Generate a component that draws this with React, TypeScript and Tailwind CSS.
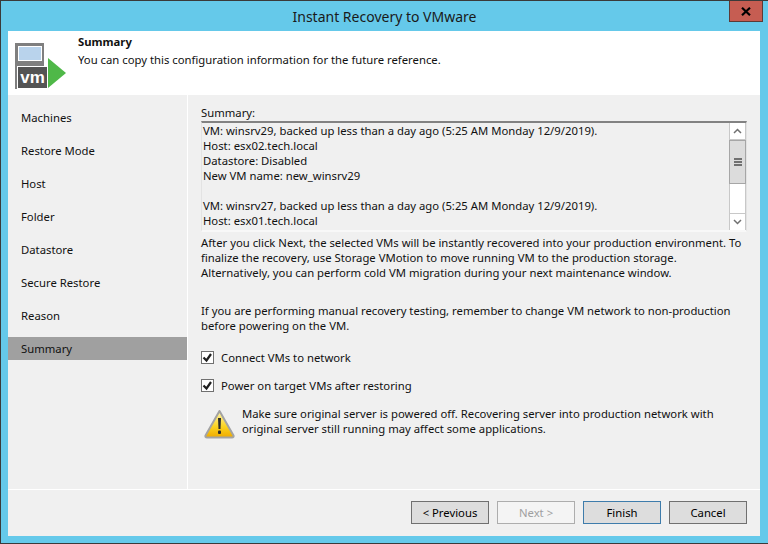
import React from 'react';

const steps = ['Machines', 'Restore Mode', 'Host', 'Folder', 'Datastore', 'Secure Restore', 'Reason', 'Summary'];

function VmLogo() {
  return (
    <svg width="52" height="46" viewBox="0 0 52 46" className="block">
      <rect x="0" y="0" width="29" height="46" fill="#7f7f7f" />
      <rect x="3.500" y="3.500" width="23" height="14" fill="#b9d3ec" stroke="#ffffff" strokeWidth="1" />
      <rect x="2.500" y="23.500" width="30" height="22" fill="#545454" stroke="#ffffff" strokeWidth="1" />
      <text x="17.500" y="40" textAnchor="middle" fill="#ffffff" fontFamily="'Liberation Sans', sans-serif" fontWeight="700" fontSize="17">vm</text>
      <polygon points="33,15 51,30 33,45" fill="#4fb848" />
    </svg>
  );
}

function WarningIcon() {
  return (
    <svg width="32" height="30" viewBox="0 0 32 30" className="block">
      <defs>
        <linearGradient id="warn" x1="0" y1="0" x2="0" y2="1">
          <stop offset="0" stopColor="#fff6b0" />
          <stop offset="0.600" stopColor="#fbd21e" />
          <stop offset="1" stopColor="#efaa00" />
        </linearGradient>
      </defs>
      <path d="M15.500 1 L29.500 25.500 Q30 27.500 28 27.500 L3 27.500 Q1 27.500 1.500 25.500 Z" fill="url(#warn)" stroke="#a3a3a3" strokeWidth="2" strokeLinejoin="round" />
      <path d="M14 8 L17 8 L16.500 19 L14.500 19 Z" fill="#2b2b2b" />
      <rect x="14" y="20.500" width="3" height="3.500" rx="1" fill="#2b2b2b" />
    </svg>
  );
}

function Check({ label }: { label: string }) {
  return (
    <label className="flex items-center h-[16px]">
      <span className="w-[13px] h-[13px] border border-[#707070] bg-white flex items-center justify-center shrink-0">
        <svg width="11" height="11" viewBox="0 0 11 11">
          <path d="M1.500 5.500 L4.500 8.500 L9 2" fill="none" stroke="#1f1f1f" strokeWidth="2.200" />
        </svg>
      </span>
      <span className="ml-[7px]">{label}</span>
    </label>
  );
}

function WizardButton({ label, tone = 'normal' }: { label: string; tone?: 'normal' | 'disabled' | 'primary' }) {
  const toneClass =
    tone === 'disabled'
      ? 'border-[#adadad] bg-[#f4f4f4] text-[#a0a0a0]'
      : tone === 'primary'
        ? 'border-[#3e7cab] bg-[#dddddd] text-black'
        : 'border-[#707070] bg-[#dddddd] text-black';
  return <div className={`w-[78px] h-[23px] border flex items-center justify-center ${toneClass}`}>{label}</div>;
}

export default function App() {
  return (
    <div className="w-[768px] h-[544px] bg-[#65c9ea] border-t border-l border-[#3a3a3a] border-b flex flex-col overflow-hidden text-[11.3px] leading-[15px] text-[#111] font-['Noto_Sans','Open_Sans',sans-serif]">
      <div className="h-[30px] flex items-start shrink-0 pr-[5px]">
        <div className="flex-1 h-[30px] flex items-center justify-center text-[14px] text-[#1a1a1a] pl-[39px]">
          Instant Recovery to VMware
        </div>
        <div className="w-[34px] h-[21px] bg-[#c65d52] border border-t-0 border-[#5c3a36] flex items-center justify-center">
          <svg width="10" height="9" viewBox="0 0 10 9">
            <path d="M1 0.800 L9 8.200 M9 0.800 L1 8.200" stroke="#000" strokeWidth="2.200" />
          </svg>
        </div>
      </div>

      <div className="w-[752px] ml-[7px] h-[505px] flex flex-col shrink-0">
        <div className="h-[64px] bg-white flex shrink-0">
          <div className="w-[70px] pl-[7px] pt-[12px] shrink-0">
            <VmLogo />
          </div>
          <div className="pt-[3px]">
            <div className="font-bold">Summary</div>
            <div className="mt-[3px]">You can copy this configuration information for the future reference.</div>
          </div>
        </div>

        <div className="flex-1 flex bg-[#f0f0f0] min-h-0">
          <div className="w-[179px] pt-[11px] flex flex-col gap-[10px] shrink-0">
            {steps.map((s) => (
              <div key={s} className={`h-[23px] pl-[13px] flex items-center ${s === 'Summary' ? 'bg-[#a0a0a0]' : ''}`}>
                {s}
              </div>
            ))}
          </div>
          <div className="flex-1 flex flex-col border-l border-white">
            <div className="flex-1 pl-[13px] pr-[13px] pt-[10px]">
              <div>Summary:</div>
              <div className="mt-[1px] h-[111px] border-t-2 border-t-[#828282] border-x border-b-2 border-x-[#e3e3e3] border-b-[#f8f8f8] flex">
                <div className="flex-1 pl-[1px] overflow-hidden whitespace-pre">
                  <div>VM: winsrv29, backed up less than a day ago (5:25 AM Monday 12/9/2019).</div>
                  <div>Host: esx02.tech.local</div>
                  <div>Datastore: Disabled</div>
                  <div>New VM name: new_winsrv29</div>
                  <div className="h-[15px]" />
                  <div>VM: winsrv27, backed up less than a day ago (5:25 AM Monday 12/9/2019).</div>
                  <div>Host: esx01.tech.local</div>
                </div>
                <div className="w-[17px] flex flex-col bg-white border-x border-[#c8c8c8]">
                  <div className="h-[17px] flex items-center justify-center border-b border-[#c8c8c8]">
                    <svg width="9" height="6" viewBox="0 0 9 6"><path d="M1 5 L4.500 1.500 L8 5" fill="none" stroke="#707070" strokeWidth="1.500" /></svg>
                  </div>
                  <div className="h-[44px] bg-[#dcdcdc] border border-[#a6a6a6] -mx-[1px] flex flex-col items-center justify-center gap-[1px]">
                    <span className="w-[8px] h-[2px] bg-[#707070]" />
                    <span className="w-[8px] h-[2px] bg-[#707070]" />
                    <span className="w-[8px] h-[2px] bg-[#707070]" />
                  </div>
                  <div className="flex-1" />
                  <div className="h-[17px] flex items-center justify-center border-t border-[#c8c8c8]">
                    <svg width="9" height="6" viewBox="0 0 9 6"><path d="M1 1 L4.500 4.500 L8 1" fill="none" stroke="#707070" strokeWidth="1.500" /></svg>
                  </div>
                </div>
              </div>
              <div className="mt-[3px]">
                <p className="whitespace-nowrap">
                  After you click Next, the selected VMs will be instantly recovered into your production environment. To<br />
                  finalize the recovery, use Storage VMotion to move running VM to the production storage.<br />
                  Alternatively, you can perform cold VM migration during your next maintenance window.
                </p>
                <p className="mt-[23px] whitespace-nowrap">
                  If you are performing manual recovery testing, remember to change VM network to non-production<br />
                  before powering on the VM.
                </p>
              </div>
              <div className="mt-[16px] flex flex-col gap-[12px]">
                <Check label="Connect VMs to network" />
                <Check label="Power on target VMs after restoring" />
              </div>
              <div className="flex mt-[13px] ml-[3px]">
                <div className="w-[38px] pt-[4px] shrink-0">
                  <WarningIcon />
                </div>
                <p className="whitespace-nowrap">
                  Make sure original server is powered off. Recovering server into production network with<br />
                  original server still running may affect some applications.
                </p>
              </div>
            </div>
          </div>
        </div>

        <div className="h-[47px] bg-[#f0f0f0] border-t border-white flex items-start justify-end gap-[8px] pt-[11px] pr-[13px] shrink-0">
          <WizardButton label="< Previous" />
          <WizardButton label="Next >" tone="disabled" />
          <WizardButton label="Finish" tone="primary" />
          <WizardButton label="Cancel" />
        </div>
      </div>
    </div>
  );
}
